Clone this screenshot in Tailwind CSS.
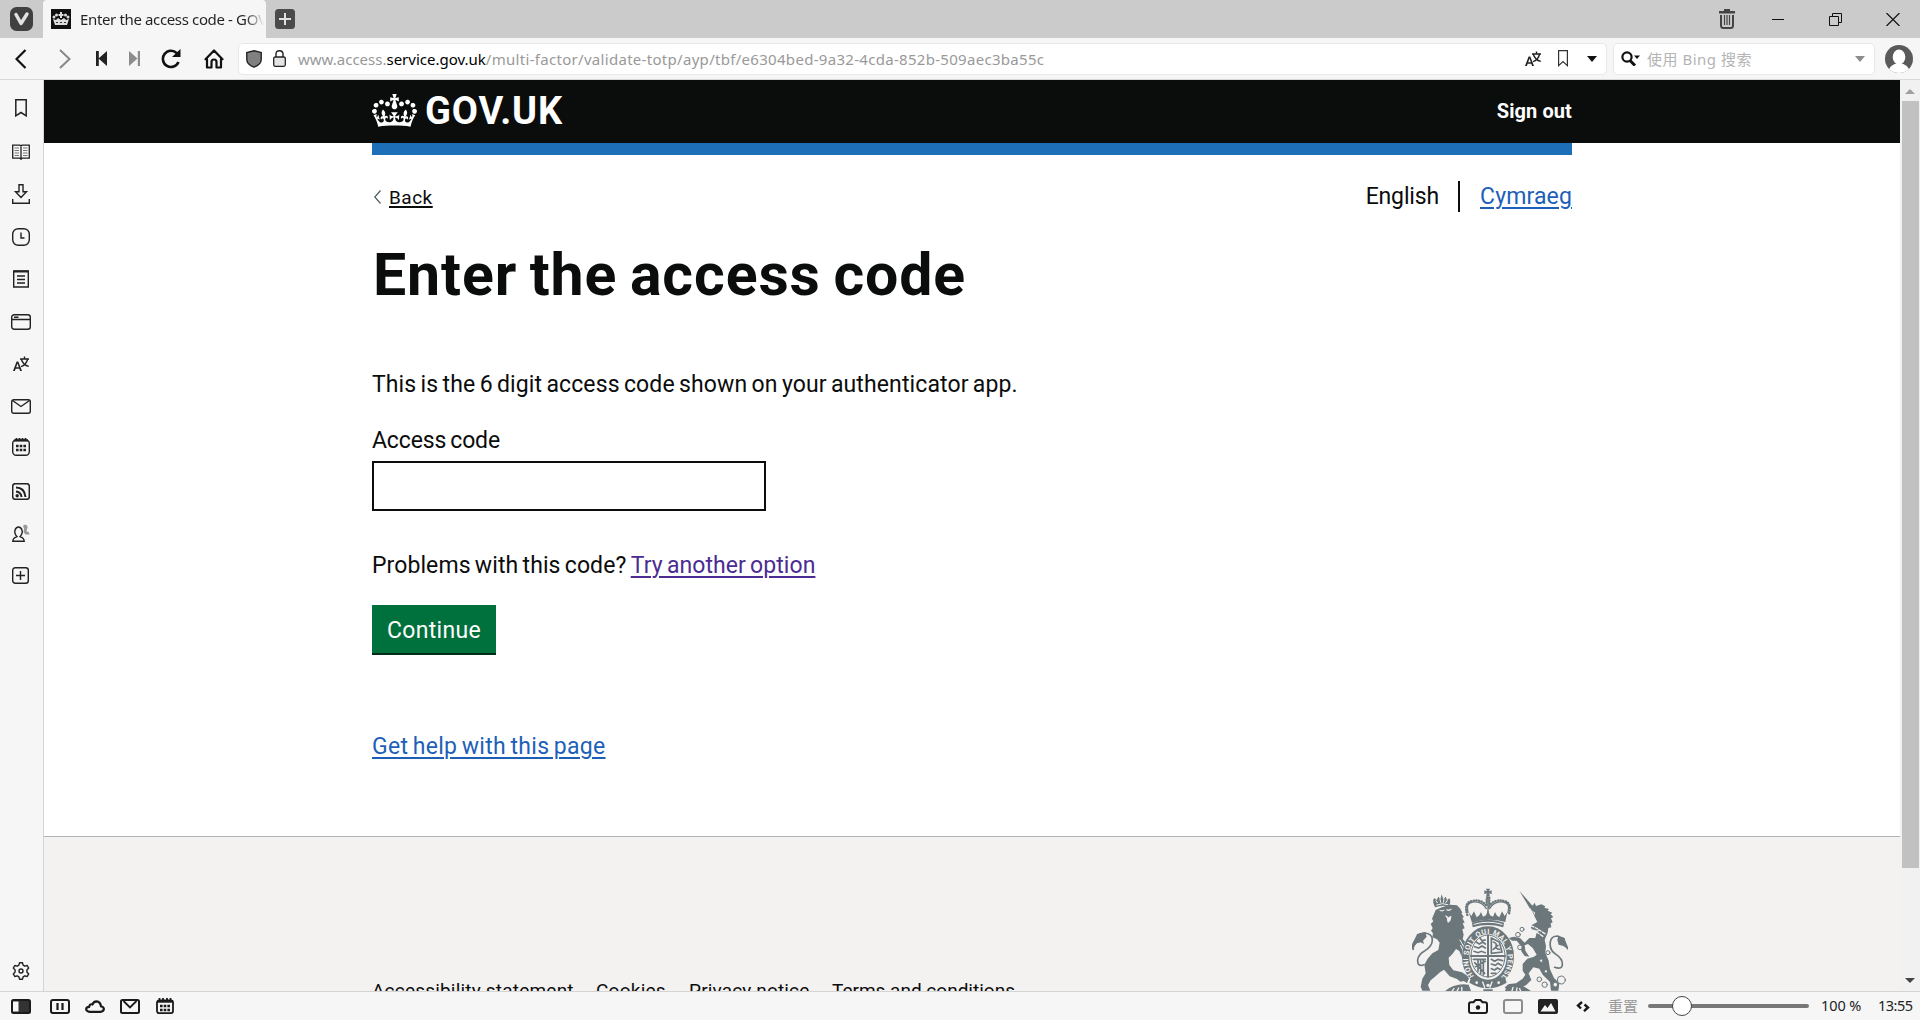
<!DOCTYPE html>
<html lang="en">
<head>
<meta charset="utf-8">
<title>Enter the access code - GOV.UK</title>
<script src="https://cdn.jsdelivr.net/npm/@tailwindcss/browser@4"></script>
</head>
<body class="h-[1020px] w-[1920px] overflow-hidden bg-[#f6f6f6] font-['Noto_Sans','Noto_Sans_CJK_SC',sans-serif] text-[15px] text-[#111]">
<svg class="hidden">
  <symbol id="translate" viewBox="0 0 16 16"><path d="M0 15 3.6 5.5h1.7L9 15H7.1l-.8-2.3H2.7L1.9 15zM3.2 11.2h2.6L4.5 7.4z" fill="currentColor"/><path d="M7 3h9M11.5.5V3M8.300 3.200C9.500 7 12.500 9.600 15.800 10.400M14.600 3.200C13.600 7 11 9.600 8 10.600" fill="none" stroke="currentColor" stroke-width="1.400"/></symbol>
</svg>
<div class="flex h-full flex-col">

  <!-- Tab strip -->
  <div class="flex h-[38px] bg-[#cbcbcb]">
    <div class="flex w-[43px] items-center pl-[10px]">
      <svg class="h-6 w-[23px]" viewBox="0 0 23 24"><rect width="23" height="24" rx="6.500" fill="#404040"/><path d="M6 7.500 11 16.500 17 7" fill="none" stroke="#e2e2e2" stroke-width="3.400" stroke-linecap="round" stroke-linejoin="round"/></svg>
    </div>
    <div class="flex w-[223px] items-center rounded-t bg-[#f6f6f6] pl-[8px]">
      <svg class="h-5 w-5 shrink-0" viewBox="0 0 20 20"><path fill="#111" d="M0 0h20v20H0z"/><g fill="#ddd"><circle cx="3" cy="8" r="1.500"/><circle cx="5.500" cy="6" r="1.500"/><circle cx="14.500" cy="6" r="1.500"/><circle cx="17" cy="8" r="1.500"/><path d="M9 3h2v2h1.500v2H11v2H9V7H7.500V5H9zM2 10l3 1 2-2 3 2 3-2 2 2 3-1-2 6H4z"/></g><path d="M5 13.500h2m2 0h2m2 0h2" stroke="#333"/></svg>
      <div class="ml-[9px] w-[184px] overflow-hidden bg-linear-to-r from-[#222] from-90% to-transparent bg-clip-text tracking-[-0.36px] whitespace-nowrap text-transparent">Enter the access code - GOV.UK</div>
    </div>
    <div class="flex items-center pl-[9px]">
      <svg class="h-5 w-5" viewBox="0 0 20 20"><rect width="20" height="20" rx="3.500" fill="#4a4a4a"/><path d="M10 4v12M4 10h12" stroke="#e0e0e0" stroke-width="2"/></svg>
    </div>
    <div class="ml-auto flex items-center pr-[20px]">
      <svg class="mr-[37px] h-5 w-4" viewBox="0 0 16 20"><path d="M5 2V0h6v2h5v2.500H0V2z" fill="#444"/><path d="M2 6v10.500q0 2.500 2.500 2.500h7q2.500 0 2.500-2.500V6" fill="none" stroke="#444" stroke-width="2"/><path d="M5.500 6v10m2.500-10v10m2.500-10v10" stroke="#444" stroke-width="1.200"/></svg>
      <svg class="mr-[45px] h-[14px] w-3" viewBox="0 0 12 14"><path d="M0 7.500h12" stroke="#111"/></svg>
      <svg class="mr-[44px] h-[13px] w-[13px]" viewBox="0 0 13 13" fill="none" stroke="#111"><path d="M.5 3.500h9v9h-9zM3.500 3.500v-3h9v9h-3"/></svg>
      <svg class="h-[13px] w-[14px]" viewBox="0 0 14 13"><path d="m.5 0 13 13m0-13-13 13" stroke="#111" stroke-width="1.200"/></svg>
    </div>
  </div>

  <!-- Address bar row -->
  <div class="flex h-[42px] items-center border-b border-[#d8d8d8] pl-[15px] text-[#222]">
    <svg class="h-5 w-3" viewBox="0 0 12 20" fill="none" stroke="#111" stroke-width="2.200"><path d="M10.500 1 1.500 10l9 9"/></svg>
    <svg class="ml-[32px] h-5 w-3" viewBox="0 0 12 20" fill="none" stroke="#888" stroke-width="2"><path d="m1 1 9.500 9L1 19"/></svg>
    <svg class="ml-[25px] h-[15px] w-[11px]" viewBox="0 0 11 15" fill="#222"><path d="M0 0h2.800v15H0zM11 0v15L2.500 7.500z"/></svg>
    <svg class="ml-[22px] h-[15px] w-[11px]" viewBox="0 0 11 15" fill="#8c8c8c"><path d="M8.800 0H11v15H8.800zM0 0v15l8.500-7.500z"/></svg>
    <svg class="ml-[21px] h-5 w-5" viewBox="0 0 20 20"><path d="M17.500 13A8.100 8.100 0 1 1 15.800 4.200" fill="none" stroke="#111" stroke-width="2.600"/><path d="M19.500 0v8h-8.500z" fill="#111"/></svg>
    <svg class="ml-[23px] h-5 w-5" viewBox="0 0 20 20" fill="none" stroke="#111" stroke-width="2.200" stroke-linejoin="round"><path d="M10 1.500 1.500 10.200H3V18.500h4.500V13a2.500 2.500 0 0 1 5 0v5.500H17v-8.300h1.500z"/></svg>
    <div class="ml-[14px] flex h-8 w-[1369px] items-center rounded-[5px] border border-[#e8e8e8] bg-white pr-[9px] pl-[7px]">
      <svg class="h-[18px] w-4" viewBox="0 0 16 18"><path d="M8 .8 15.200 2.500v7q0 5-7.200 7.700Q.8 14.500.8 9.500v-7z" fill="#808080" stroke="#222" stroke-width="1.400"/></svg>
      <svg class="ml-[11px] h-[17px] w-[13px]" viewBox="0 0 13 17"><rect x=".7" y="7" width="11.600" height="9.300" rx="1.500" fill="#e4e4e4" stroke="#222" stroke-width="1.300"/><path d="M3 7V4q0-3.300 3.500-3.300T10 4v3" fill="none" stroke="#222" stroke-width="1.400"/></svg>
      <div class="mt-[2px] ml-[12px] whitespace-nowrap text-[#999]">www.access.<span class="text-black">service.gov.uk</span><span class="tracking-[0.3px]">/multi-factor/validate-totp/ayp/tbf/e6304bed-9a32-4cda-852b-509aec3ba55c</span></div>
      <svg class="ml-auto h-4 w-4"><use href="#translate"/></svg>
      <svg class="ml-[17px] h-[17px] w-[10px]" viewBox="0 0 10 17" fill="none" stroke="#333" stroke-width="1.200"><path d="M.6.6h8.800v15L5 11.500.6 15.600z"/></svg>
      <svg class="ml-[19px] h-[6px] w-[10px]" viewBox="0 0 10 6"><path d="M0 0h10L5 6z" fill="#111"/></svg>
    </div>
    <div class="ml-[6px] flex h-8 w-[262px] items-center rounded-[5px] border border-[#e8e8e8] bg-white pr-[9px] pl-[7px]">
      <svg class="h-[15px] w-[19px]" viewBox="0 0 19 15"><circle cx="6" cy="6" r="4.600" fill="none" stroke="#111" stroke-width="2.200"/><path d="m9 9.500 5 5" stroke="#111" stroke-width="3"/><path d="M13 4.500h6l-3 3.500z" fill="#111"/></svg>
      <span class="mt-[2px] ml-[7px] tracking-[0.5px] whitespace-nowrap text-[#b4b4b4]">使用 Bing 搜索</span>
      <svg class="ml-auto h-[6px] w-[10px]" viewBox="0 0 10 6"><path d="M0 0h10L5 6z" fill="#8c8c8c"/></svg>
    </div>
    <svg class="ml-[10px] h-7 w-7" viewBox="0 0 28 28"><circle cx="14" cy="14" r="14" fill="#5a5a5a"/><path d="M4 24q3-5 8-5.500h4q5 .5 8 5.500-4 4-10 4T4 24z" fill="#fff"/><ellipse cx="14" cy="12" rx="6.300" ry="7.500" fill="#fff"/></svg>
  </div>

  <div class="flex min-h-0 flex-1">
    <!-- Side panel switcher -->
    <nav class="flex w-11 shrink-0 flex-col items-center border-r border-[#d4d4d4] pt-[17px] pr-[2px] text-[#222]">
      <div class="flex h-[22px] items-center"><svg class="h-[18px] w-3" viewBox="0 0 12 18" fill="none" stroke="#222" stroke-width="1.500"><path d="M.8.8h10.400v16L6 13.500.8 16.800z"/></svg></div>
      <div class="mt-[22px] flex h-[22px] items-center"><svg class="h-4 w-[18px]" viewBox="0 0 18 16" fill="none" stroke="#222" stroke-width="1.300"><path d="M.7 1.200H8l1 .8 1-.8h7.300v13H10l-1 1-1-1H.7zM9 2v13"/><path d="M2.500 4H7M2.500 6.500H7M2.500 9H7m-4.500 2.500H7M11 4h4.500M11 6.500h4.500M11 9h4.500M11 11.500h4.500" stroke="#777" stroke-width="1"/></svg></div>
      <div class="mt-[20px] flex h-[22px] items-center"><svg class="h-5 w-[18px]" viewBox="0 0 18 20" fill="none" stroke="#222" stroke-width="1.400"><path d="M7 .7h4v7h3.500L9 13.500 3.500 7.700H7zM.7 15v4.300h16.600V15"/></svg></div>
      <div class="mt-[21px] flex h-[22px] items-center"><svg class="h-[18px] w-[18px]" viewBox="0 0 18 18" fill="none" stroke="#222" stroke-width="1.400"><rect x=".7" y=".7" width="16.600" height="16.600" rx="5.500"/><path d="M9 4.500V10h3.500"/></svg></div>
      <div class="mt-[20px] flex h-[22px] items-center"><svg class="h-[18px] w-4" viewBox="0 0 16 18" fill="none" stroke="#222" stroke-width="1.400"><path d="M.7 1h14.600v16H.7z"/><path d="M.7 1.500h14.600" stroke-width="2"/><path d="M4 6h8M4 9.500h8M4 13h8"/></svg></div>
      <div class="mt-[21px] flex h-[22px] items-center"><svg class="h-4 w-5" viewBox="0 0 20 16" fill="none" stroke="#222" stroke-width="1.400"><rect x=".7" y=".7" width="18.600" height="14.600" rx="2.500"/><path d="M.7 5.500h18.600M3 3.200h4.500"/></svg></div>
      <div class="mt-[20px] flex h-[22px] items-center"><svg class="h-4 w-4"><use href="#translate"/></svg></div>
      <div class="mt-[20px] flex h-[22px] items-center"><svg class="h-[15px] w-5" viewBox="0 0 20 15" fill="none" stroke="#222" stroke-width="1.400"><rect x=".7" y=".7" width="18.600" height="13.600" rx="2"/><path d="m1.500 1.500 8.500 6 8.500-6"/></svg></div>
      <div class="mt-[19px] flex h-[22px] items-center"><svg class="h-[18px] w-[18px]" viewBox="0 0 18 18" fill="none" stroke="#222" stroke-width="1.400"><rect x=".7" y="2" width="16.600" height="15.300" rx="3.500"/><path d="M2 2.500h14" stroke-width="2.200"/><path d="M4.500 0v3m3-3v3m3-3v3m3-3v3" stroke-width="1.800"/><path d="M4 8h10M4 12h10" stroke-width="2.600" stroke-dasharray="2.600 1.100"/></svg></div>
      <div class="mt-[22px] flex h-[22px] items-center"><svg class="h-[17px] w-[18px]" viewBox="0 0 18 17" fill="none" stroke="#222" stroke-width="1.500"><rect x=".7" y=".7" width="16.600" height="15.600" rx="2.500"/><path d="M4 4.500q8.500 0 9.500 9.500M4 8.500q5 .5 5.500 5.500" stroke-width="2"/><circle cx="5.200" cy="12.800" r="1.700" fill="#222" stroke="none"/></svg></div>
      <div class="mt-[20px] flex h-[22px] items-center"><svg class="h-[18px] w-[18px]" viewBox="0 0 18 18"><path d="M11 2q1-1.800 3-1.200 2.500 1 1 4.500l-.5 2q3 .6 3 3.200h-4l-2-2.500q1.500-3-.5-6z" fill="#999"/><path d="M.8 17.200q.2-3.200 4.200-4.500-3-3.500-2-6.500Q4 3 6.500 3t3.500 3.200q1 3-2 6.500 4 1.300 4.200 4.500z" fill="#f6f6f6" stroke="#222" stroke-width="1.400"/></svg></div>
      <div class="mt-[20px] flex h-[22px] items-center"><svg class="h-[17px] w-[17px]" viewBox="0 0 17 17" fill="none" stroke="#222" stroke-width="1.400"><rect x=".7" y=".7" width="15.600" height="15.600" rx="2.500"/><path d="M8.500 4v9M4 8.500h9"/></svg></div>
      <svg class="mt-auto mb-[11px] h-[18px] w-[18px]" viewBox="0 0 18 18" fill="none" stroke="#222" stroke-width="1.400" stroke-linejoin="round"><path d="M7.500.8h3l.6 2.400 1.700 1 2.400-.7 1.500 2.600-1.800 1.800v2.200l1.800 1.800-1.500 2.600-2.400-.7-1.700 1-.6 2.400h-3l-.6-2.400-1.700-1-2.400.7-1.500-2.600 1.800-1.800V7.900L1.300 6.100l1.500-2.600 2.400.7 1.700-1z"/><circle cx="9" cy="9" r="2"/></svg>
    </nav>

    <!-- Web page -->
    <div class="w-[1856px] overflow-hidden bg-white font-['Roboto',sans-serif] text-[23px] leading-[30px] text-[#0b0c0c]">
      <header class="h-[63px] bg-[#0b0c0c] pl-[328px] text-white">
        <div class="flex h-full w-[1200px] items-center">
          <svg class="mt-[-2px] h-[33px] w-[45px]" viewBox="0 0 132 97" fill="#fff"><path d="M25 30.200c3.500 1.500 7.700-.2 9.100-3.700 1.500-3.600-.2-7.800-3.900-9.200-3.600-1.400-7.600.3-9.100 3.900-1.400 3.500.3 7.500 3.900 9zM9 39.500c3.600 1.500 7.800-.2 9.200-3.700 1.500-3.600-.2-7.800-3.900-9.100-3.600-1.500-7.600.2-9.100 3.800-1.400 3.500.3 7.500 3.800 9zM4.400 57.200c3.500 1.500 7.700-.2 9.100-3.800 1.500-3.600-.2-7.700-3.900-9.100-3.500-1.500-7.600.3-9.100 3.800-1.400 3.500.3 7.600 3.900 9.100zm38.300-21.400c3.500 1.500 7.700-.2 9.100-3.800 1.500-3.600-.2-7.700-3.900-9.100-3.600-1.500-7.600.3-9.100 3.800-1.300 3.600.4 7.700 3.900 9.100zm64.400-5.600c-3.600 1.500-7.800-.2-9.100-3.700-1.500-3.600.2-7.800 3.800-9.200 3.600-1.400 7.700.3 9.200 3.900 1.300 3.500-.4 7.500-3.900 9zm15.900 9.300c-3.600 1.500-7.700-.2-9.100-3.700-1.500-3.600.2-7.800 3.700-9.100 3.600-1.500 7.700.2 9.200 3.800 1.500 3.500-.3 7.500-3.800 9zm4.700 17.700c-3.600 1.500-7.800-.2-9.200-3.800-1.500-3.600.2-7.700 3.900-9.100 3.600-1.500 7.700.3 9.200 3.800 1.300 3.500-.4 7.600-3.900 9.100zM89.300 35.800c-3.600 1.500-7.800-.2-9.200-3.800-1.400-3.600.2-7.700 3.900-9.100 3.600-1.500 7.700.3 9.200 3.800 1.400 3.600-.3 7.700-3.900 9.100zM69.700 17.700l8.900 4.700V9.300l-8.900 2.800c-.2-.3-.5-.6-.9-.9L72.400 0H59.600l3.500 11.200c-.3.3-.6.5-.9.9l-8.800-2.800v13.100l8.800-4.700c.3.3.6.7.9.9l-5 15.400v.1c-.2.8-.4 1.600-.4 2.400 0 4.100 3.100 7.500 7 8.100h.2c.3 0 .7.1 1 .1.4 0 .7 0 1-.1h.2c4-.6 7.100-4.100 7.100-8.100 0-.8-.1-1.700-.4-2.400V34l-5.100-15.400c.4-.2.7-.6 1-.9zM66 92.800c16.900 0 32.800 1.100 47.100 3.200 4-16.900 8.900-26.700 14-33.500l-9.600-3.400c1 4.900 1.100 7.200 0 10.200-1.500-1.400-3-4.300-4.200-8.700L108.600 76c2.800-2 5-3.200 7.500-3.300-4.400 9.400-10 11.900-13.600 11.200-4.300-.8-6.300-4.600-5.600-7.900 1-4.700 5.700-5.900 8-.5 4.300-8.700-3-11.400-7.600-8.800 7.100-7.200 7.900-13.500 2.100-21.100-8 6.100-8.100 12.300-4.500 20.800-4.700-5.400-12.100-2.500-9.500 6.200 3.400-5.200 7.900-2 7.200 3.100-.6 4.300-6.400 7.800-13.500 7.200-10.300-.9-10.900-8-11.200-13.800 2.500-.5 7.100 1.800 11 7.300L80.200 60c-4.100 4.400-8 5.300-12.300 5.400 1.400-4.400 8-11.600 8-11.600H55.500s6.400 7.200 7.900 11.600c-4.200-.1-8-1-12.300-5.400l1.400 16.400c3.900-5.500 8.500-7.700 10.900-7.300-.3 5.800-.9 12.800-11.100 13.800-7.200.6-12.900-2.900-13.500-7.200-.7-5 3.800-8.300 7.100-3.100 2.700-8.700-4.600-11.600-9.400-6.200 3.700-8.500 3.600-14.700-4.600-20.800-5.800 7.600-5 13.900 2.200 21.100-4.700-2.600-11.900.1-7.700 8.800 2.300-5.500 7.100-4.200 8.100.5.700 3.300-1.300 7.100-5.700 7.900-3.500.7-9-1.800-13.500-11.200 2.500.1 4.700 1.300 7.500 3.300l-4.700-15.400c-1.200 4.400-2.700 7.200-4.300 8.700-1.100-3-.9-5.300 0-10.200l-9.500 3.400c5 6.900 9.900 16.700 14 33.500 14.800-2.100 30.800-3.200 47.700-3.200z"/></svg>
          <span class="mt-[-1px] ml-[8px] text-[38px] font-bold tracking-[0.9px]">GOV.UK</span>
          <span class="mt-[-2px] ml-auto text-[20px] font-bold tracking-[0.1px]">Sign out</span>
        </div>
      </header>
      <div class="ml-[328px] w-[1200px]">
        <div class="h-3 bg-[#1d70b8]"></div>
        <div class="mt-[24px] flex h-9 items-center">
          <svg class="ml-[2px] h-[14px] w-[7px]" viewBox="0 0 7 14" fill="none" stroke="#505a5f" stroke-width="1.200"><path d="M6.500.5.8 7l5.700 6.500"/></svg>
          <a class="mt-[1px] ml-[8px] text-[19px] tracking-[0.5px] underline decoration-2 underline-offset-[2px]">Back</a>
          <span class="ml-auto tracking-[-0.15px]">English</span>
          <span class="mt-[-2px] ml-[19px] h-[31px] w-[2px] bg-[#0b0c0c]"></span>
          <a class="ml-[20px] tracking-[0.14px] text-[#1d5fb8] underline decoration-2 underline-offset-[3px]">Cymraeg</a>
        </div>
        <h1 class="mt-[25px] pl-[1px] text-[59px] leading-[70px] font-bold tracking-[0.9px] [word-spacing:-3px]">Enter the access code</h1>
        <p class="mt-[60px] tracking-[0.11px] [word-spacing:-1.5px]">This is the 6 digit access code shown on your authenticator app.</p>
        <label class="mt-[26px] block tracking-[-0.14px] [word-spacing:-1.5px]">Access code</label>
        <div class="mt-[5px] h-[50px] w-[394px] border-2 border-[#0b0c0c]"></div>
        <p class="mt-[40px] whitespace-pre tracking-[0.08px] [word-spacing:-1.5px]">Problems with this code? <a class="tracking-[0.06px] text-[#4c2c92] underline decoration-2 underline-offset-[3px]">Try another option</a></p>
        <div class="mt-[24px] flex h-[50px] w-[124px] items-center justify-center border-b-2 border-[#002d18] bg-[#00703c] pt-[4px] tracking-[0.31px] text-white">Continue</div>
        <p class="mt-[77px]"><a class="tracking-[0.29px] text-[#1d5fb8] underline decoration-2 underline-offset-[3px] [word-spacing:-1.5px]">Get help with this page</a></p>
      </div>
      <footer class="mt-[74px] h-[300px] border-t border-[#b1b4b6] bg-[#f3f2f1]">
        <div class="ml-[328px] flex w-[1200px] text-[19px] leading-6">
          <div class="flex pt-[142px] whitespace-nowrap">
            <span class="w-[224px] tracking-[0.2px]">Accessibility statement</span>
            <span class="w-[93px] tracking-[0.25px]">Cookies</span>
            <span class="w-[143px] tracking-[0.15px]">Privacy notice</span>
            <span class="tracking-[0px]">Terms and conditions</span>
          </div>
          <!-- Royal coat of arms -->
          <svg class="mt-[51px] mr-[4px] ml-auto h-[104px] w-[156px]" viewBox="96 204 468 312" fill="#6c777b" stroke-linecap="round">
            <!-- central crown -->
            <path d="M318 206h12l-3 8 8-3v12l-8-3 3 9h-12l3-9-8 3v-12l8 3z"/>
            <path d="M262 285Q250 248 276 243Q304 236 320 258V232h8v26Q344 236 372 243Q398 248 386 285" fill="none" stroke="#6c777b" stroke-width="7" stroke-dasharray="1 7"/>
            <path d="M264 278Q256 250 278 246Q306 242 319 266M384 278Q392 250 370 246Q342 242 329 266M324 230v50" fill="none" stroke="#6c777b" stroke-width="4"/>
            <path d="M266 276l8 12 8-14 8 18 8-6 5-10 6 14 9-4 6-16 6 16 9 4 6-14 5 10 8 6 8-18 8 14 8-12-6 30Q324 292 276 308z"/>
            <path d="M276 308Q324 290 372 308l-2 14Q324 308 278 322z"/><path d="M282 313Q324 300 366 313" fill="none" stroke="#f3f2f1" stroke-width="3"/>
            <!-- lion -->
            <path d="M165 262q-10-20-2-28l7 6 5-10 6 8 4-15 5 15 7-8 4 10 7-5q6 8-1 25-20-6-42 2z"/>
            <path d="M170 255q18-8 34-1M168 242l4 6m8-10 2 9m10-9-2 9m12-6-5 7" fill="none" stroke="#f3f2f1" stroke-width="3"/>
            <path d="M167 270l18-8 26-8 20 2 10 10 6 12-3 2 8 12-5 1 7 15-6 1 6 16-7 3 4 16-3 13 12 14 6 20-2 26-7 8-10-10-9-22-10-6-10 14-12 12 2 22 12 16 26 6 16 10 5 8-6 14-10-6-10 2-10-8-22-8-17-20-12 8-16 14-12 10-8 14 7 17h-24l-5-12 5-24 10-16-4-26 10-18 14-16 18-10 4-22-8-10-14-6 2-12-6-8 5-8-6-12 8-8-4-8z"/>
            <path d="M180 272q8 3 12-1m8-1q8 4 14-2M198 288l8 5 7-4-3 13-6 5-2-12z" fill="#f3f2f1" stroke="#f3f2f1" stroke-width="3"/>
            <path d="M240 360l10 18m-8-2 6 14" stroke="#f3f2f1" stroke-width="3"/>
            <path d="M132 434q-20 8-19-14 2-18 22-28 22-14 22-32 0-20-24-21l-20 5-16 34 3 12q-4-20 20-27l8 4-5-16" fill="none" stroke="#6c777b" stroke-width="5"/>
            <path d="M104 360l14-20 18-4 4 14-14 16-16 4-12 16q-4-16 6-26z"/>
            <!-- unicorn -->
            <path d="M418 212 458 258l-8 8z"/>
            <path d="M450 262l10-8 4-6 4 10 16-5 12 6-3 4 14 4-4 5 14 6-5 5 8 8-7 4 5 12-6 3 2 12-9 2-2 14-5 12-4 10 4 18-2 20 10 24 4 26 12 26 16 16-3 22h-22l-3-26-22-22-10-18-18-4-14 18 8 20-16 16-14 6-18 12-22-2-10-10 14-10 20-2 20-14 8-12-8-12 0-20 14-16 20-6 8-6-12-20-14-12-10 4 2 16 12 18-14-2-10-14-4-20-10-12-14 0-10-8 16-4 18 4 14 14 14-14 18 0 4-16 10-8-18 2-10-6 2-10 18-10z"/>
            <path d="M436 322q24 4 56 30M442 314q20 4 54 28" fill="none" stroke="#f3f2f1" stroke-width="4" stroke-dasharray="8 5"/>
            <path d="M452 278q6-6 12 0l-6 16-16 6" fill="none" stroke="#f3f2f1" stroke-width="3"/>
            <path d="M524 442q24 8 23-10 0-16-18-28-22-14-18-38 2-18 22-18l18 8 12 30" fill="none" stroke="#6c777b" stroke-width="5"/>
            <path d="M534 350l20 4 2 16 8 18-14-10-14-4-4-14z"/>
            <g fill="#f3f2f1" stroke="#6c777b" stroke-width="3"><circle cx="504" cy="398" r="6"/><circle cx="478" cy="478" r="7"/><circle cx="494" cy="494" r="8"/><circle cx="544" cy="480" r="12"/><circle cx="526" cy="494" r="7"/><circle cx="414" cy="344" r="7"/><circle cx="426" cy="328" r="6"/><circle cx="420" cy="382" r="7"/><circle cx="484" cy="422" r="5"/><circle cx="498" cy="454" r="5"/></g>
            <!-- garter and shield -->
            <ellipse cx="324" cy="410" rx="79" ry="93" fill="#f3f2f1"/>
            <ellipse cx="324" cy="410" rx="67" ry="80" fill="none" stroke="#6c777b" stroke-width="22"/>
            <path id="garter" d="M282 468A59 74 0 1 1 366 468" fill="none"/>
            <text font-size="22" font-weight="700" fill="#f3f2f1" font-family="Roboto"><textPath href="#garter" textLength="325">HONI SOIT QUI MAL Y PENSE</textPath></text>
            <ellipse cx="324" cy="408" rx="51" ry="63" fill="#f3f2f1" stroke="#6c777b" stroke-width="3"/>
            <g fill="none" stroke="#6c777b" stroke-width="5"><path d="M324 346v124M273 408h102" stroke-width="6"/><path d="M288 366l10 6 10-6 8 6M284 380l12 4 10-6 10 6M282 394l12 4 10-4 12 4M300 354l6 8 10-2"/><path d="M334 354l24 12 8 30-32 4zM340 366q12 4 8 12t10 10M340 388l14-12"/><path d="M280 418h36M284 428l30 32M294 420v34m8-34v42m8-42v44M286 440l30-16"/><path d="M334 418l10 6 10-6 14 4M334 432l12 4 8-6 10 6M334 446l10 4 8-6 8 4M334 460l14 0"/></g>
            <path d="M274 470q50 36 100 0l6 18q-56 34-112 0z"/><g fill="#f3f2f1"><circle cx="290" cy="488" r="4"/><circle cx="324" cy="496" r="5"/><circle cx="356" cy="488" r="4"/><path d="M308 486l6 16m22-16-6 16" stroke="#f3f2f1" stroke-width="4"/></g>
            <!-- motto scroll -->
            <path d="M192 516q30-28 74-22l8 22zM456 516q-30-28-74-22l-8 22zM310 508h28v8h-28z"/>
            <path d="M214 516l8-10m8 10 6-12m10 12-1-14m150 14 4-14m10 14 2-12m12 12-4-10" stroke="#f3f2f1" stroke-width="4"/>
          </svg>
        </div>
      </footer>
    </div>

    <!-- Vertical scrollbar -->
    <div class="flex w-[20px] flex-col items-center bg-[#f1f1f1]">
      <svg class="mt-[9px] h-[5px] w-[10px]" viewBox="0 0 10 5"><path d="M0 5h10L5 0z" fill="#a0a0a0"/></svg>
      <div class="mt-[7px] ml-[1px] h-[767px] w-[17px] bg-[#c1c1c1]"></div>
      <svg class="mt-auto mb-[8px] h-[5px] w-[10px]" viewBox="0 0 10 5"><path d="M0 0h10L5 5z" fill="#444"/></svg>
    </div>
  </div>

  <!-- Status bar -->
  <div class="flex h-[29px] items-center border-t border-[#d4d4d4] pl-[11px] text-[#222]">
    <svg class="h-[15px] w-5" viewBox="0 0 20 15"><rect x="1" y="1" width="18" height="13" rx="1.500" fill="#333" stroke="#1a1a1a" stroke-width="2"/><path d="M2 2.500h5.500v10H2z" fill="#f6f6f6"/></svg>
    <svg class="ml-[19px] h-[15px] w-5" viewBox="0 0 20 15" fill="none" stroke="#1a1a1a" stroke-width="2"><rect x="1" y="1" width="18" height="13" rx="2"/><path d="M7.500 4v7m5-7v7" stroke-width="2.200"/></svg>
    <svg class="ml-[15px] h-[13px] w-5" viewBox="0 0 20 13" fill="none" stroke="#1a1a1a" stroke-width="2.200" stroke-linejoin="round"><path d="M4.500 11.800h11.500Q19 11 18.800 8.600 18.300 6.500 16 6.500 15.500 1.500 11.500 1.300 8.500 1.500 7.500 4.500 4.500 3.500 4.200 6.800 1 7 1.200 9.500q.6 2 3.300 2.300z"/></svg>
    <svg class="ml-[15px] h-[15px] w-5" viewBox="0 0 20 15" fill="none" stroke="#1a1a1a" stroke-width="2"><rect x="1" y="1" width="18" height="13" rx="1.500"/><path d="m3.500 2 6.500 6.500L16.500 2" stroke-width="1.800"/></svg>
    <svg class="ml-[16px] h-4 w-[18px]" viewBox="0 0 18 16" fill="none" stroke="#1a1a1a" stroke-width="1.800"><rect x="1" y="2.500" width="16" height="12.600" rx="2"/><path d="M1.500 3.500h15" stroke-width="2.400"/><path d="M3.500 0v3M7 0v3m4-3v3m3.500-3v3"/><path d="M4 8h10M4 12h10" stroke-width="2.400" stroke-dasharray="2.600 1.100"/></svg>

    <svg class="ml-auto h-[15px] w-5" viewBox="0 0 20 15" fill="none" stroke="#1a1a1a" stroke-width="2"><path d="M3 3.200h2.500L7.500 1h5l2 2.200H17q2 0 2 2V12q0 2-2 2H3q-2 0-2-2V5.200q0-2 2-2z"/><circle cx="10" cy="8.500" r="2.200" fill="#1a1a1a" stroke="none"/></svg>
    <svg class="ml-[15px] h-[15px] w-5" viewBox="0 0 20 15" fill="none" stroke="#8c8c8c" stroke-width="2"><rect x="1" y="1" width="18" height="13" rx="2"/></svg>
    <svg class="ml-[15px] h-[15px] w-5" viewBox="0 0 20 15"><rect width="20" height="15" rx="2" fill="#222"/><path d="M2.500 12.500 7 6l2.500 3L13 4l4.500 8.500z" fill="#f6f6f6"/></svg>
    <svg class="ml-[18px] h-[11px] w-[14px]" viewBox="0 0 14 11" fill="none" stroke="#1a1a1a" stroke-width="2.400"><path d="M6 1 2 4.500l3 3M8.500 3.500l3.500 3L8 10.200"/></svg>
    <span class="ml-[18px] w-10 text-[15px] whitespace-nowrap text-[#999]">重置</span>
    <div class="relative h-[4.500px] w-[161px] rounded-full bg-[#777]"><div class="absolute top-[-8px] left-[24px] h-5 w-5 rounded-full border-[1.500px] border-[#444] bg-white"></div></div>
    <span class="ml-[12px] w-[57px] text-[14.500px] tracking-[-0.1px] whitespace-nowrap">100 %</span>
    <span class="w-[42px] text-[14.500px] tracking-[-0.5px]">13:55</span>
  </div>
</div>
</body>
</html>
